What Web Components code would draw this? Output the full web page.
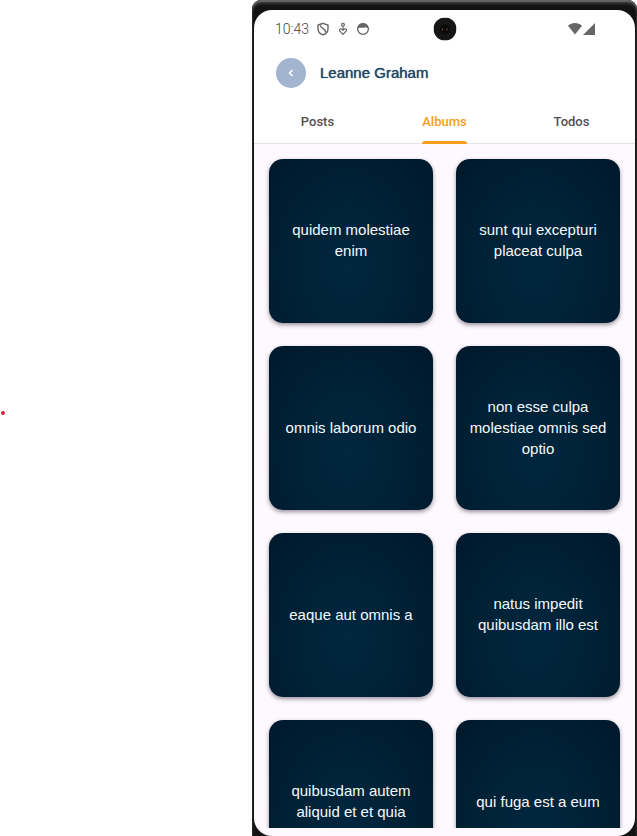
<!DOCTYPE html>
<html lang="en">
<head>
<meta charset="utf-8">
<meta name="viewport" content="width=device-width, initial-scale=1">
<title>Leanne Graham – Albums</title>
<style>
  html, body { margin: 0; height: 100%; background: #fff; }
  body { font-family: "Liberation Sans", Arial, sans-serif; }
</style>
</head>
<body>
<album-page></album-page>
<script>
const define = (name, html) => {
  const template = document.createElement('template');
  template.innerHTML = html;
  customElements.define(name, class extends HTMLElement {
    constructor() {
      super();
      this.attachShadow({ mode: 'open' }).append(template.content.cloneNode(true));
    }
  });
};

define('status-bar', `
<style>
  :host { display: flex; align-items: center; position: relative; height: 38px; padding: 0 40px 0 21px; color: #666; box-sizing: border-box; flex: none; }
  time { font: 300 14px/20px Roboto, sans-serif; color: #444; margin-right: 7px; }
  svg { display: block; flex: none; }
  .left { display: flex; gap: 6px; }
  .right { display: flex; margin-left: auto; }
  .camera { position: absolute; left: 50%; top: 50%; width: 23px; height: 23px; transform: translate(-50%, -50%); }
</style>
<time>10:43</time>
<div class="left">
  <svg width="14" height="14" viewBox="0 0 14 14" fill="none" stroke="currentColor" stroke-width="1.4"><path d="M7 1.3 12 3v4c0 2.800-2 4.800-5 5.900C4 11.800 2 9.800 2 7V3z"/><path d="M4.300 3.200C4.300 7 9.800 6 9.600 10.400"/></svg>
  <svg width="14" height="14" viewBox="0 0 14 14" fill="none" stroke="currentColor" stroke-width="1.200"><circle cx="7" cy="2.800" r="1.400"/><path d="M7 4.500v3M7 12.300 3.700 9C2.800 7 5 6 7 8.300 9 6 11.200 7 10.300 9z"/></svg>
  <svg width="14" height="14" viewBox="0 0 14 14"><circle cx="7" cy="7" r="5.400" fill="none" stroke="currentColor" stroke-width="1.300"/><path d="M1.600 6.200C2 3 4 1.200 7 1.200s5 1.800 5.400 5l-2-.4-.8-1-.8 1H3.800z" fill="currentColor"/></svg>
</div>
<div class="right">
  <svg width="14" height="14" viewBox="0 0 14 14"><path d="M0 3.700C4 .2 10 .2 14 3.700L7 12.500z" fill="currentColor"/></svg>
  <svg width="13" height="14" viewBox="0 0 13 14"><path d="M13 1v12H1z" fill="currentColor"/></svg>
</div>
<svg class="camera" viewBox="0 0 23 23"><circle cx="11.500" cy="11.500" r="11.500" fill="#171616"/><circle cx="11.500" cy="12" r="5" fill="#0c0a0a"/><path d="M9 11v2M13.500 11v2" stroke="#74503f"/></svg>
`);

define('app-header', `
<style>
  :host { display: flex; align-items: center; gap: 14px; height: 50px; padding: 0 22px; flex: none; }
  button { display: grid; place-items: center; width: 30px; height: 30px; border: 0; border-radius: 50%; padding: 0; background: #a2b4cf; color: #fff; }
  h1 { margin: 0; font-size: 15px; line-height: 20px; font-weight: 400; color: #1f4662; text-shadow: 0 0 1px currentColor; }
</style>
<button type="button" aria-label="Back"><svg width="10" height="10" viewBox="0 0 10 10" fill="none" stroke="currentColor" stroke-width="1.500"><path d="M6.500 2 3.500 5l3 3"/></svg></button>
<h1><slot></slot></h1>
`);

define('tab-bar', `
<style>
  :host { display: grid; grid-template-columns: repeat(3, 1fr); height: 46px; box-sizing: border-box; box-shadow: inset 0 -1px #e6e1e8; flex: none; }
</style>
<slot></slot>
`);

define('tab-item', `
<style>
  :host { display: flex; justify-content: center; }
  button { position: relative; border: 0; padding: 1px 0 0; background: none; font: 500 13px/20px Roboto, sans-serif; color: #505054; }
  :host([selected]) button { color: #f79e1b; }
  :host([selected]) button::after { content: ""; position: absolute; left: 0; right: 0; bottom: 0; height: 3px; border-radius: 3px 3px 0 0; background: #f79e1b; }
</style>
<button type="button"><slot></slot></button>
`);

define('album-grid', `
<style>
  :host { display: grid; grid-template-columns: repeat(2, 1fr); align-content: start; gap: 23px; padding: 15px 15px 0; flex: 1; min-height: 0; overflow: hidden; }
</style>
<slot></slot>
`);

define('album-card', `
<style>
  :host { display: flex; align-items: center; justify-content: center; box-sizing: border-box; aspect-ratio: 1; padding: 0 10px 2px; border-radius: 14px; text-align: center; font-size: 15px; line-height: 21px; color: #f6fafc;
    background: radial-gradient(ellipse 60% 80% at 48% 65%, #00273f 0%, #002338 45%, #001d31 85%, #001a2d 100%);
    box-shadow: 0 2px 4px rgba(30, 20, 40, .45); }
</style>
<span><slot></slot></span>
`);

define('phone-frame', `
<style>
  :host { display: flex; box-sizing: border-box; height: 100%; padding: 10px 2px 0; overflow: hidden; border-radius: 9px 9px 0 0;
    background: #121212; box-shadow: inset 0 2px 1px #666, inset 0 4px 3px #3a3a3a; }
  main { flex: 1; min-width: 0; display: flex; flex-direction: column; box-sizing: border-box; padding-bottom: 8px; border-radius: 18px; overflow: hidden; background: linear-gradient(#fff 134px, #fef9fe 134px); }
</style>
<main><slot></slot></main>
`);

define('album-page', `
<style>
  :host { display: grid; grid-template-columns: 252fr 385fr; height: 100vh; }
  aside { display: flex; align-items: center; padding: 0 0 10px 1px; }
  i { width: 4px; height: 4px; border-radius: 50%; background: #d0283c; }
</style>
<aside><i></i></aside>
<phone-frame>
  <status-bar></status-bar>
  <app-header>Leanne Graham</app-header>
  <tab-bar>
    <tab-item>Posts</tab-item>
    <tab-item selected>Albums</tab-item>
    <tab-item>Todos</tab-item>
  </tab-bar>
  <album-grid>
    <album-card>quidem molestiae enim</album-card>
    <album-card>sunt qui excepturi placeat culpa</album-card>
    <album-card>omnis laborum odio</album-card>
    <album-card>non esse culpa molestiae omnis sed optio</album-card>
    <album-card>eaque aut omnis a</album-card>
    <album-card>natus impedit quibusdam illo est</album-card>
    <album-card>quibusdam autem aliquid et et quia</album-card>
    <album-card>qui fuga est a eum</album-card>
  </album-grid>
</phone-frame>
`);
</script>
</body>
</html>
